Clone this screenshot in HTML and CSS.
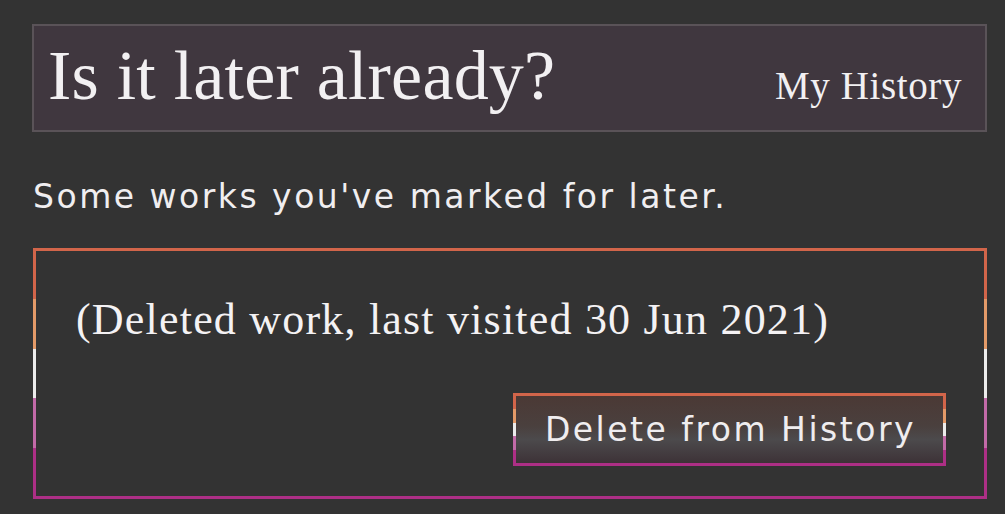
FILE: index.html
```html
<!DOCTYPE html>
<html>
<head>
<meta charset="utf-8">
<link rel="stylesheet" href="styles.css">
</head>
<body>
<header class="site-header">
  <h1 class="title">Is it later already?</h1>
  <a class="nav-link" href="#">My History</a>
</header>
<p class="intro">Some works you've marked for later.</p>
<section class="card">
  <p class="deleted">(Deleted work, last visited 30 Jun 2021)</p>
  <div class="actions">
    <button class="btn">Delete from History</button>
  </div>
</section>
</body>
</html>
```
FILE: styles.css
```css
html, body {
  margin: 0;
  background: #333333;
}
body {
  padding: 24px 18px 0 32px;
  color: #f0eef0;
  font-family: "DejaVu Sans", Verdana, sans-serif;
}
.site-header {
  display: flex;
  justify-content: space-between;
  align-items: baseline;
  height: 108px;
  box-sizing: border-box;
  padding: 0 23px 0 14px;
  background: #40373f;
  border: 2px solid #5a5358;
}
.title {
  margin: 0;
  font-family: "Liberation Serif", Georgia, serif;
  font-weight: normal;
  font-size: 70px;
  line-height: 99px;
  letter-spacing: 0.2px;
  color: #f2f0f2;
}
.nav-link {
  font-family: "Liberation Serif", Georgia, serif;
  font-size: 39px;
  letter-spacing: 0.6px;
  color: #f2f0f2;
  text-decoration: none;
}
.intro {
  margin: 45px 0 0 1px;
  font-size: 33px;
  line-height: 40px;
  letter-spacing: 2.5px;
  color: #f0eef0;
}
.card {
  margin: 31px 0 0 1px;
  border: 3px solid;
  border-image: linear-gradient(to bottom,
    #d2654a 0 20%, #e39a68 20% 40%, #ececec 40% 60%, #c26aa8 60% 80%, #ad2f86 80% 100%) 1;
  padding: 44px 38px 30px 40px;
}
.deleted {
  margin: 0;
  font-family: "Liberation Serif", Georgia, serif;
  font-size: 44px;
  line-height: 50px;
  letter-spacing: 1.2px;
  color: #f4f2f4;
}
.actions {
  display: flex;
  justify-content: flex-end;
  margin-top: 48px;
}
.btn {
  height: 73px;
  padding: 0 27px 0 29px;
  font-family: "DejaVu Sans", Verdana, sans-serif;
  font-size: 33px;
  letter-spacing: 2.5px;
  color: #efedef;
  border: 3px solid;
  border-image: linear-gradient(to bottom,
    #d2654a 0 20%, #e39a68 20% 40%, #ececec 40% 60%, #c26aa8 60% 80%, #ad2f86 80% 100%) 1;
  background: linear-gradient(to bottom, #4b3935 0%, #4a403e 45%, #4c4a4c 65%, #3d3237 100%);
}
```
